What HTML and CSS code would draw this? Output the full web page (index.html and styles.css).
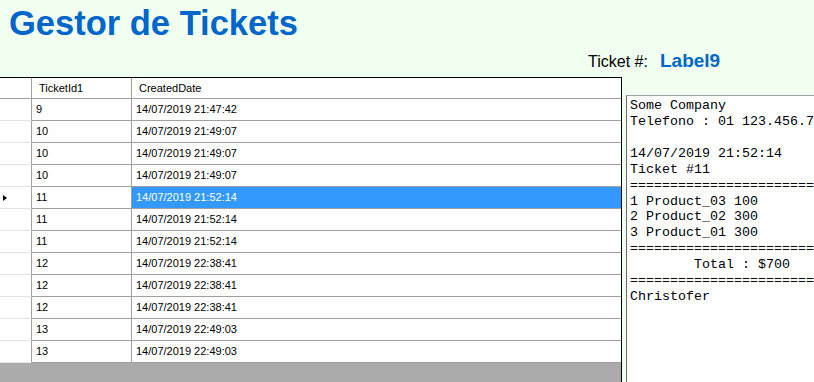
FILE: index.html
```html
<!DOCTYPE html>
<html lang="es">
<head>
	<meta charset="UTF-8">
	<title>Gestor de Tickets</title>
	<link rel="stylesheet" href="styles.css">
</head>
<body>
	<div id="page">
		<h1 class="title">Gestor de Tickets</h1>
		<div class="ticketLine">
			<span class="ticketCaption">Ticket #:</span>
			<span class="ticketLabel">Label9</span>
		</div>
		<div class="main">
			<div class="grid">
				<div class="row head">
					<div class="rh"></div>
					<div class="c1">TicketId1</div>
					<div class="c2">CreatedDate</div>
				</div>
				<div class="row"><div class="rh"></div><div class="c1">9</div><div class="c2">14/07/2019 21:47:42</div></div>
				<div class="row"><div class="rh"></div><div class="c1">10</div><div class="c2">14/07/2019 21:49:07</div></div>
				<div class="row"><div class="rh"></div><div class="c1">10</div><div class="c2">14/07/2019 21:49:07</div></div>
				<div class="row"><div class="rh"></div><div class="c1">10</div><div class="c2">14/07/2019 21:49:07</div></div>
				<div class="row current"><div class="rh"><i class="arrow"></i></div><div class="c1">11</div><div class="c2 selected">14/07/2019 21:52:14</div></div>
				<div class="row"><div class="rh"></div><div class="c1">11</div><div class="c2">14/07/2019 21:52:14</div></div>
				<div class="row"><div class="rh"></div><div class="c1">11</div><div class="c2">14/07/2019 21:52:14</div></div>
				<div class="row"><div class="rh"></div><div class="c1">12</div><div class="c2">14/07/2019 22:38:41</div></div>
				<div class="row"><div class="rh"></div><div class="c1">12</div><div class="c2">14/07/2019 22:38:41</div></div>
				<div class="row"><div class="rh"></div><div class="c1">12</div><div class="c2">14/07/2019 22:38:41</div></div>
				<div class="row"><div class="rh"></div><div class="c1">13</div><div class="c2">14/07/2019 22:49:03</div></div>
				<div class="row"><div class="rh"></div><div class="c1">13</div><div class="c2">14/07/2019 22:49:03</div></div>
			</div>
<pre class="receipt">Some Company
Telefono : 01 123.456.789

14/07/2019 21:52:14
Ticket #11
================================
1 Product_03 100
2 Product_02 300
3 Product_01 300
================================
        Total : $700
================================
Christofer</pre>
		</div>
	</div>
</body>
</html>
```

FILE: styles.css
```css
*{margin:0px;padding:0px;box-sizing:border-box;}
html,body{
	width: 814px;
	height: 382px;
	overflow: hidden;
	background-color: #f0fff0;
}
#page{
	font-family: "Liberation Sans", Arial, sans-serif;
}
.title{
	height: 44px;
	padding: 3px 0 0 9px;
	font-size: 34.5px;
	line-height: 40px;
	font-weight: bold;
	color: #0066cc;
}
.ticketLine{
	display: flex;
	align-items: baseline;
	height: 33px;
	padding: 7px 0 0 588px;
}
.ticketCaption{
	width: 72px;
	font-size: 16px;
	line-height: 20px;
	color: #000;
}
.ticketLabel{
	font-size: 19px;
	line-height: 20px;
	font-weight: bold;
	color: #0066cc;
}
.main{
	display: flex;
	align-items: flex-start;
}
/* tabla de tickets */
.grid{
	flex-shrink: 0;
	width: 622px;
	height: 320px;
	background-color: #ababab;
	border-top: 1px solid #000;
	border-right: 1px solid #000;
	overflow: hidden;
	font-size: 11px;
	color: #000;
}
.row{
	display: flex;
	height: 22px;
	line-height: 21px;
}
.row > div{
	flex-shrink: 0;
	background-color: #fff;
	border-bottom: 1px solid #a0a0a0;
	white-space: nowrap;
}
.rh{
	width: 32px;
	border-right: 1px solid #a0a0a0;
	display: flex;
	align-items: center;
}
.row > .rh{
	border-bottom-color: #e3e3e3;
}
.c1{
	width: 100px;
	padding-left: 4px;
	border-right: 1px solid #a0a0a0;
}
.c2{
	width: 489px;
	padding-left: 4px;
}
.head{
	height: 21px;
	line-height: 20px;
}
.head > .c1,.head > .c2{
	padding-left: 7px;
}
.head > .rh{
	border-bottom-color: #a0a0a0;
}
.row > .selected{
	background-color: #3399ff;
	color: #fff;
}
.arrow{
	display: block;
	width: 0;
	height: 0;
	margin: 1px 0 0 3px;
	border-left: 4px solid #000;
	border-top: 3px solid transparent;
	border-bottom: 3px solid transparent;
}
/* ticket impreso */
.receipt{
	flex-shrink: 0;
	width: 240px;
	height: 300px;
	margin: 18px 0 0 4px;
	padding: 2px 0 0 3px;
	background-color: #fff;
	border-top: 1px solid #a0a0a0;
	border-left: 1px solid #696969;
	overflow: hidden;
	font-family: "Liberation Mono", "Courier New", monospace;
	font-size: 13.33px;
	line-height: 15.92px;
	color: #000;
}
```
